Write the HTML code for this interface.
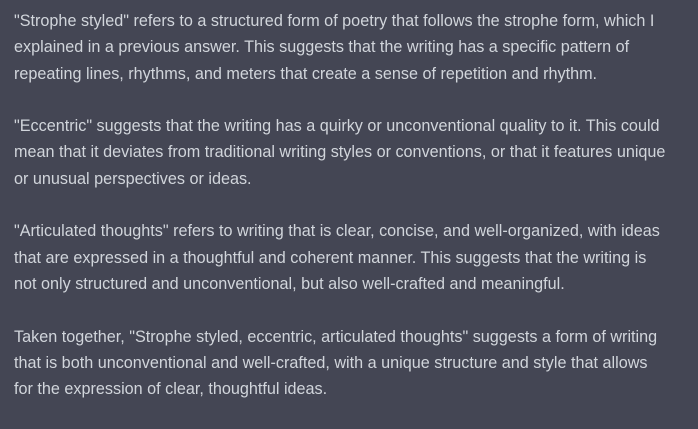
<!DOCTYPE html>
<html><head><meta charset="utf-8"><style>
html,body{margin:0;padding:0;background:#444654;width:698px;height:417px;overflow:hidden}
body{font-family:"Liberation Sans",sans-serif;font-size:16.2px;color:#d1d5db;}
.w{position:absolute;left:14px;top:8px}
p{margin:0 0 26.3px 0;line-height:26.3px;white-space:nowrap}
</style></head><body><div class="w">
<p>"Strophe styled" refers to a structured form of poetry that follows the strophe form, which I<br>explained in a previous answer. This suggests that the writing has a specific pattern of<br>repeating lines, rhythms, and meters that create a sense of repetition and rhythm.</p>
<p>"Eccentric" suggests that the writing has a quirky or unconventional quality to it. This could<br>mean that it deviates from traditional writing styles or conventions, or that it features unique<br>or unusual perspectives or ideas.</p>
<p>"Articulated thoughts" refers to writing that is clear, concise, and well-organized, with ideas<br>that are expressed in a thoughtful and coherent manner. This suggests that the writing is<br>not only structured and unconventional, but also well-crafted and meaningful.</p>
<p>Taken together, "Strophe styled, eccentric, articulated thoughts" suggests a form of writing<br>that is both unconventional and well-crafted, with a unique structure and style that allows<br>for the expression of clear, thoughtful ideas.</p>
</div></body></html>
